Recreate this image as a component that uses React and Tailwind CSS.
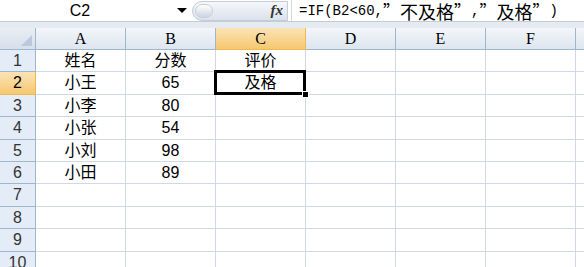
const cols = ['A', 'B', 'C', 'D', 'E', 'F'];

const rows = [
  { n: 1, h: 'h-[22px]', cells: ['姓名', '分数', '评价'] },
  { n: 2, h: 'h-[23px]', cells: ['小王', '65', '及格'] },
  { n: 3, h: 'h-[22px]', cells: ['小李', '80', ''] },
  { n: 4, h: 'h-[23px]', cells: ['小张', '54', ''] },
  { n: 5, h: 'h-[22px]', cells: ['小刘', '98', ''] },
  { n: 6, h: 'h-[22px]', cells: ['小田', '89', ''] },
  { n: 7, h: 'h-[23px]', cells: [] },
  { n: 8, h: 'h-[22px]', cells: [] },
  { n: 9, h: 'h-[23px]', cells: [] },
  { n: 10, h: 'h-[22px]', cells: [] },
];

const cellFont = { fontFamily: '"Liberation Sans", "Noto Sans CJK SC", sans-serif' };
const cjk = { fontFamily: '"Noto Sans CJK SC", sans-serif' };

function Q() {
  return <span className="text-[17px] leading-none" style={cjk}>”</span>;
}

function FormulaBar() {
  return (
    <div className="flex h-[22px] items-center bg-white border-b border-[#c5ccd6]">
      <div className="relative flex h-full w-[192px] items-center">
        <span className="w-[160px] text-center text-[16px] leading-none text-black" style={cellFont}>C2</span>
        <span className="absolute right-[5px] top-[8px] h-0 w-0 border-x-[5px] border-t-[5px] border-x-transparent border-t-black" />
      </div>
      <div className="relative flex h-[20px] w-[96px] items-center justify-end rounded-l-full border border-[#c3ccd8] bg-gradient-to-b from-[#f4f7fb] to-[#dbe2ec] pr-[4px]">
        <span className="absolute left-[2px] top-[2px] h-[14px] w-[18px] rounded-full bg-gradient-to-b from-[#ffffff] to-[#cdd5e0] border border-[#c8d0dc]" />
        <span className="text-[15px] leading-none italic font-bold text-[#333]" style={{ fontFamily: '"Liberation Serif", serif' }}>fx</span>
      </div>
      <div className="w-[1px] h-full bg-[#d0d7e2] ml-[3px]" />
      <div className="flex items-center pl-[7px] text-[14px] leading-none text-black whitespace-nowrap" style={{ fontFamily: '"Liberation Mono", monospace' }}>
        =IF(B2&lt;60,<Q /><span className="text-[18px] leading-none" style={cjk}>不及格</span><Q />,<Q /><span className="text-[18px] leading-none" style={cjk}>及格</span><Q />)
      </div>
    </div>
  );
}

function HeaderRow() {
  return (
    <div className="flex h-[22px]">
      <div className="relative w-[36px] shrink-0 border-r border-b border-[#9eb6ce] bg-gradient-to-b from-[#e9eef5] to-[#d6dfea]">
        <span className="absolute bottom-[3px] right-[3px] h-0 w-0 border-b-[11px] border-l-[11px] border-b-[#b9c8da] border-l-transparent" />
      </div>
      {cols.map((c) => (
        <div
          key={c}
          className={`flex w-[90px] shrink-0 items-center justify-center border-r border-b pt-[1px] text-[16px] text-black ${
            c === 'C'
              ? 'border-[#f0b850] bg-gradient-to-b from-[#fbe3b6] to-[#f6c86f]'
              : 'border-[#9eb6ce] bg-gradient-to-b from-[#f3f6fa] to-[#dde5ef]'
          }`}
          style={{ fontFamily: '"Liberation Serif", serif' }}
        >
          {c}
        </div>
      ))}
      <div className="flex-1 border-b border-[#9eb6ce] bg-gradient-to-b from-[#f3f6fa] to-[#dde5ef]" />
    </div>
  );
}

function Row({ n, h, cells }) {
  return (
    <div className={`flex ${h}`}>
      <div
        className={`flex w-[36px] shrink-0 items-center justify-center border-r border-b text-[16px] ${
          n === 2
            ? 'border-[#f0b850] bg-gradient-to-b from-[#fbe3b6] to-[#f6c86f] text-black'
            : 'border-[#9eb6ce] bg-[#e4ecf7] text-[#333]'
        }`}
        style={cellFont}
      >
        {n}
      </div>
      {cols.map((c, i) => {
        const selected = n === 2 && c === 'C';
        return (
          <div
            key={c}
            className={`relative flex w-[90px] shrink-0 items-center justify-center border-r border-b border-[#d0d7e5] bg-white text-[16px] text-black ${
              selected ? 'z-10' : ''
            }`}
            style={cellFont}
          >
            {cells[i] || ''}
            {selected && (
              <>
                <span className="absolute left-[-2px] top-[-2px] right-[-1px] bottom-[-1px] border-[3px] border-black" />
                <span className="absolute right-[-4px] bottom-[-4px] h-[7px] w-[7px] bg-black border border-white" />
              </>
            )}
          </div>
        );
      })}
      <div className="flex-1 border-b border-[#d0d7e5] bg-white" />
    </div>
  );
}

export default function App() {
  return (
    <div className="h-[267px] w-[584px] overflow-hidden bg-white select-none">
      <FormulaBar />
      <div className="h-[6px] bg-[#e6ebf2]" />
      <HeaderRow />
      {rows.map((r) => (
        <Row key={r.n} {...r} />
      ))}
    </div>
  );
}
